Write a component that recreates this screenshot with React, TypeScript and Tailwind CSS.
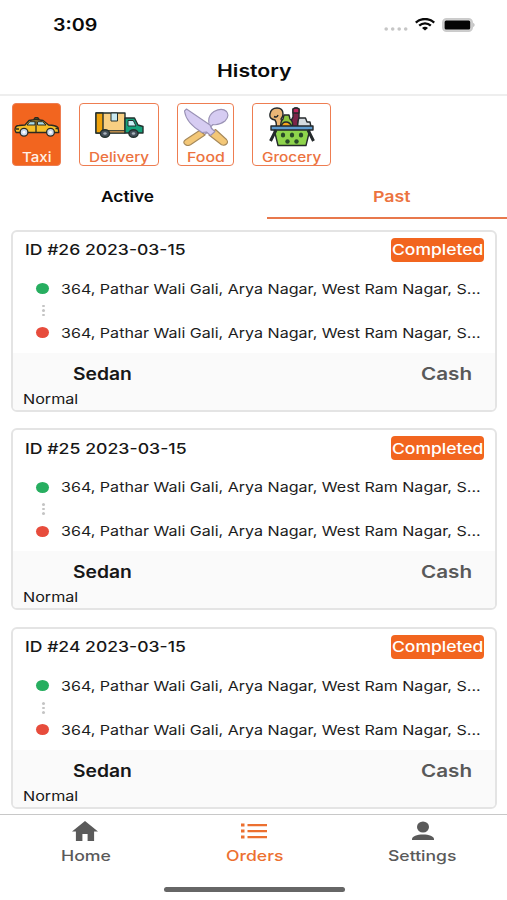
import { useLayoutEffect, useRef, type ReactNode } from "react";

/* Stretches a single line of text to the full width of its box. */
function Wide({ className, children }: { className: string; children: ReactNode }) {
  const box = useRef<HTMLDivElement>(null);
  const ink = useRef<HTMLSpanElement>(null);
  useLayoutEffect(() => {
    if (box.current && ink.current) {
      ink.current.style.transform = `scaleX(${box.current.clientWidth / ink.current.offsetWidth})`;
    }
  }, []);
  return (
    <div ref={box} className={`shrink-0 whitespace-nowrap ${className}`}>
      <span ref={ink} className="inline-block origin-left align-top">
        {children}
      </span>
    </div>
  );
}

function StatusBar() {
  return (
    <div className="flex h-12 items-center pt-px pl-[53px]">
      <Wide className="w-[44px] text-[17px] leading-6 font-semibold">3:09</Wide>
      <div className="ml-auto flex items-center pr-[31px]">
        <svg width="24" height="6" viewBox="0 0 24 6" className="mt-2 mr-[7px]" fill="#c6c6c6">
          <circle cx="2.2" cy="3" r="1.8" />
          <circle cx="8.7" cy="3" r="1.8" />
          <circle cx="15.2" cy="3" r="1.8" />
          <circle cx="21.7" cy="3" r="1.8" />
        </svg>
        <svg width="20" height="13" viewBox="0 0 20 13" className="mr-[7px]" fill="none" stroke="#0a0a0a" strokeWidth="2.3">
          <path d="M.8 4.6C5.8-.2 14.200-.2 19.200 4.600" />
          <path d="M4.200 7.700c3.300-3 8.300-3 11.600 0" />
          <path d="M7 9.900c1.800-1.400 4.200-1.400 6 0L10 12.600Z" fill="#0a0a0a" stroke="none" />
        </svg>
        <svg width="34" height="14" viewBox="0 0 34 14">
          <rect x=".9" y=".9" width="29.200" height="12.200" rx="3.600" fill="#d6d6d6" stroke="#cbcbcb" strokeWidth="1.800" />
          <rect x="2.600" y="2.400" width="25.600" height="9.200" rx="1.500" fill="#050505" />
          <path d="M31.400 4.800q2.200 2.200 0 4.400Z" fill="#a5a5a5" />
        </svg>
      </div>
    </div>
  );
}

function TaxiArt() {
  return (
    <svg width="46" height="20" viewBox="0 0 46 20" stroke="#2b2a20" strokeWidth="1.300" strokeLinejoin="round">
      <path d="M20 3q0-2.500 2.500-2.500T25 3Z" fill="#5b5a2a" />
      <path d="M1 13Q1 8.500 5 8.500L11 8 15 3.500Q22 2 29 3.500L34.500 8q7 .2 9.500 2.500l.8 5H2Z" fill="#f6bd27" />
      <path d="M13 8 15.800 4.700H21V8ZM23.500 4.700h5L32 8h-8.500Z" fill="#a9dce8" strokeWidth="1" />
      <path d="M22 4v11.500M2 12h3M41.500 11.500h3" fill="none" />
      <circle cx="10" cy="15.300" r="3.900" fill="#c9d9ee" />
      <circle cx="36.500" cy="15.300" r="3.900" fill="#c9d9ee" />
      <circle cx="10" cy="15.300" r="1.400" fill="#fff" stroke="none" />
      <circle cx="36.500" cy="15.300" r="1.400" fill="#fff" stroke="none" />
    </svg>
  );
}

function TruckArt() {
  return (
    <svg width="49" height="26" viewBox="0 0 49 26" stroke="#23302e" strokeWidth="1.400" strokeLinejoin="round">
      <path d="M1 1h29v20H1Z" fill="#f8cf82" />
      <path d="M1 1h7v20H1Z" fill="#f0a30c" />
      <path d="M8 18.500h22V21H8Z" fill="#b98a4c" strokeWidth=".8" />
      <path d="M16 1h6.500v8H16Z" fill="#c9eaf2" strokeWidth="1" />
      <path d="M30 6h9.500l3.500 7 5 1.500V21H30Z" fill="#16a37c" />
      <path d="M33 8.500h5.300l2.700 5.500h-8Z" fill="#c9eff5" strokeWidth="1" />
      <ellipse cx="10" cy="21.500" rx="4.600" ry="3.700" fill="#46515b" />
      <ellipse cx="38.500" cy="21.500" rx="4.600" ry="3.700" fill="#46515b" />
      <ellipse cx="10" cy="21.500" rx="1.700" ry="1.300" fill="#aab4bb" stroke="none" />
      <ellipse cx="38.500" cy="21.500" rx="1.700" ry="1.300" fill="#aab4bb" stroke="none" />
    </svg>
  );
}

function CutleryArt() {
  return (
    <svg width="46" height="38" viewBox="0 0 46 38" strokeWidth="1.100" strokeLinejoin="round">
      <path d="M25 17 29 20.500 21 27 17 23.500Z" fill="#cfc4ee" stroke="#9a92b5" />
      <path d="M16.500 22.500 22 27 7.500 36.800Q4 38.500 1.800 36.200T2.500 31.800Z" fill="#f3c777" stroke="#a5885a" />
      <path d="M26 15Q24.500 8 31 3.500 39-.8 43.500 3.500 47 8 42 13 36 17.500 30 16.500L26.500 20 23.500 18Z" fill="#d6ccf2" stroke="#9a92b5" />
      <path d="M32.500 21.500 43.500 31.500Q45.500 34 43.500 36T38.500 36.800L26 27Z" fill="#f3c777" stroke="#a5885a" />
      <path d="M3.500 1 27 17 28.500 20.500 32 23.500 27.500 27.500 23.500 24 19 24.500Q3 15 1.500 3Z" fill="#d6ccf2" stroke="#9a92b5" />
    </svg>
  );
}

function BasketArt() {
  return (
    <svg width="46" height="40" viewBox="0 0 46 40" stroke="#24292b" strokeWidth="1.400" strokeLinejoin="round">
      <path d="M28 20 29.500 11h7l1.500 4h3l1 5Z" fill="#d5dbe0" />
      <path d="M1 7Q2 1 8 1t6 6q0 3-2 5 2 4 1 8H7q1-4-1-7-6-1-5-6Z" fill="#eab676" />
      <path d="M5 9.500q3 1.500 4-1.500" fill="none" />
      <path d="M22 20q-1-6 2-10V2q3-2 6 0v9q-2 4-1 9Z" fill="#7c2448" />
      <path d="M24 2q3-2 6 0v4h-6Z" fill="#c0285e" />
      <path d="M12 20q-1-5 2-8l1-4h5l1 4q4 3 2 8Z" fill="#8dc63f" />
      <path d="M12 20q1-5 5-5t6 5Z" fill="#f7a51c" />
      <path d="M5 22h36l-4 16.500H9Z" fill="#8fd44c" />
      <path d="M2 19h42v4H2Z" fill="#5d9bd0" />
      <path d="M7 23 1.500 34M39 23l5.500 11" strokeWidth="3" fill="none" />
      <g fill="#284a28" stroke="none">
        <ellipse cx="14" cy="28" rx="2.200" ry="2.500" />
        <ellipse cx="23" cy="28" rx="2.200" ry="2.500" />
        <ellipse cx="32" cy="28" rx="2.200" ry="2.500" />
        <ellipse cx="18.500" cy="34.500" rx="2.200" ry="2.300" />
        <ellipse cx="27.500" cy="34.500" rx="2.200" ry="2.300" />
      </g>
    </svg>
  );
}

function Services() {
  const tile = "flex h-[63px] flex-col items-center justify-between rounded-[4px] border-[1.5px] border-[#ee7d51] text-[13px] leading-4 font-medium";
  return (
    <div className="flex h-[72px] items-start pt-[7px] pl-[12px]">
      <div className={`${tile} w-[49px] bg-[#f2651f] text-[#fff0e6]`}>
        <div className="pt-[13px]"><TaxiArt /></div>
        <Wide className="w-[29px]">Taxi</Wide>
      </div>
      <div className={`${tile} ml-[18px] w-[80px] text-[#ec7340]`}>
        <div className="pt-[8px]"><TruckArt /></div>
        <Wide className="w-[60px]">Delivery</Wide>
      </div>
      <div className={`${tile} ml-[18px] w-[57px] text-[#ec7340]`}>
        <div className="pt-[4px]"><CutleryArt /></div>
        <Wide className="w-[38px]">Food</Wide>
      </div>
      <div className={`${tile} ml-[18px] w-[79px] text-[#ec7340]`}>
        <div className="pt-[3px]"><BasketArt /></div>
        <Wide className="w-[59px]">Grocery</Wide>
      </div>
    </div>
  );
}

function Tabs() {
  return (
    <div className="flex h-[51px] text-[15px] leading-5 font-semibold">
      <div className="flex w-[267px] pt-[19px] pl-[101px]">
        <Wide className="w-[53px]">Active</Wide>
      </div>
      <div className="flex flex-1 border-b-2 border-[#e8784c] pt-[19px] pl-[106px] text-[#ec7340]">
        <Wide className="w-[38px]">Past</Wide>
      </div>
    </div>
  );
}

function Stop({ color }: { color: string }) {
  return (
    <div className="flex h-5 items-center pl-[23px]">
      <div className={`h-[11px] w-[13px] shrink-0 rounded-[50%] ${color}`} />
      <Wide className="ml-[11.5px] w-[420px] text-[13.5px] leading-5 text-[#1c1c1c]">
        364, Pathar Wali Gali, Arya Nagar, West Ram Nagar, S...
      </Wide>
    </div>
  );
}

function OrderCard({ id }: { id: number }) {
  return (
    <div className="mb-[16.700px] h-[182px] w-[486px] shrink-0 overflow-hidden rounded-[6px] border-2 border-[#e4e4e4] bg-white">
      <div className="flex h-[47px] items-start justify-between pt-[6px] pr-[11px] pl-[11px]">
        <Wide className="ml-[.5px] w-[161px] pt-[.5px] text-[14.500px] leading-6 font-medium text-[#171717]">ID #{id} 2023-03-15</Wide>
        <div className="h-6 w-[93px] rounded-[4px] bg-[#f2651f] px-px text-white">
          <Wide className="w-[91px] pt-[.5px] text-[15px] leading-6 font-medium">Completed</Wide>
        </div>
      </div>
      <Stop color="bg-[#27ae60]" />
      <div className="flex h-6 flex-col items-center justify-center gap-[2px] pr-[423px] pl-px">
        <i className="h-[2.500px] w-[3px] rounded-full bg-[#c4c4c4]" />
        <i className="h-[2.500px] w-[3px] rounded-full bg-[#c4c4c4]" />
        <i className="h-[2.500px] w-[3px] rounded-full bg-[#c4c4c4]" />
      </div>
      <Stop color="bg-[#e74c3c]" />
      <div className="mt-[10px] h-[60px] bg-[#fafafa] pt-[9px]">
        <div className="flex justify-between pr-[23px] pl-[60px] text-[17px] leading-6 font-semibold">
          <Wide className="w-[58.500px] text-[#171717]">Sedan</Wide>
          <Wide className="w-[51px] text-[#595959]">Cash</Wide>
        </div>
        <Wide className="mt-[3px] ml-[9.500px] w-[55px] text-[13.500px] leading-5 text-[#171717]">Normal</Wide>
      </div>
    </div>
  );
}

function BottomNav() {
  return (
    <div className="flex h-[86px] flex-col items-center border-t-[1.500px] border-[#c8c8c8] bg-white text-[14.500px] leading-5 font-medium text-[#5a5a5a]">
      <div className="flex w-full pt-[6px] pl-px">
        <div className="flex flex-1 flex-col items-center">
          <svg width="26" height="20" viewBox="2 3 20 17" preserveAspectRatio="none" fill="currentColor">
            <path d="M10 20v-6h4v6h5v-8h3L12 3 2 12h3v8z" />
          </svg>
          <Wide className="mt-[5px] w-[49.500px]">Home</Wide>
        </div>
        <div className="flex flex-1 flex-col items-center text-[#ec7030]">
          <svg width="26" height="20" viewBox="0 0 26 20" fill="currentColor">
            <path d="M0 2.500h3.500v3H0zM0 8.500h3.500v3H0zM0 14.500h3.500v3H0zM6.500 3H26v2.200H6.500zM6.500 9H26v2.200H6.500zM6.500 15H26v2.200H6.500z" />
          </svg>
          <Wide className="mt-[5px] w-[57px]">Orders</Wide>
        </div>
        <div className="flex flex-1 flex-col items-center">
          <svg width="22" height="20" viewBox="0 0 22 20" fill="currentColor">
            <ellipse cx="11" cy="6" rx="6" ry="5.500" />
            <path d="M0 19v-.8c0-2.800 5-4.600 11-4.600s11 1.800 11 4.600V19Z" />
          </svg>
          <Wide className="mt-[5px] w-[69px]">Settings</Wide>
        </div>
      </div>
      <div className="mt-[21px] ml-px h-[5px] w-[181px] rounded-full bg-[#666]" />
    </div>
  );
}

export default function App() {
  return (
    <div className="flex h-[900px] w-[507px] flex-col overflow-hidden bg-white font-['Inter','Liberation_Sans',sans-serif] text-[#0a0a0a]">
      <StatusBar />
      <div className="flex h-[47.500px] justify-center border-b-2 border-[#eee] pt-[11px] pl-px">
        <Wide className="w-[75px] text-[17px] leading-6 font-semibold">History</Wide>
      </div>
      <Services />
      <Tabs />
      <div className="flex flex-1 flex-col items-start overflow-hidden pt-[11px] pl-[11px]">
        <OrderCard id={26} />
        <OrderCard id={25} />
        <OrderCard id={24} />
      </div>
      <BottomNav />
    </div>
  );
}
